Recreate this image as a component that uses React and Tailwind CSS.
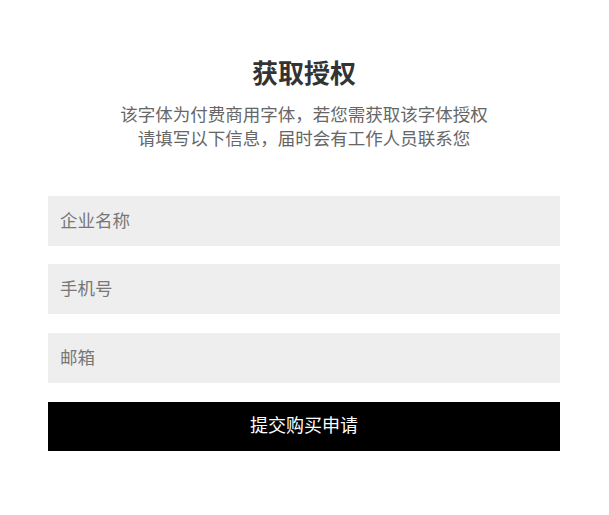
export default function App() {
  return (
    <div
      className="min-h-screen bg-white px-[48px]"
      style={{ fontFamily: '"Noto Sans CJK SC", "Noto Sans", sans-serif' }}
    >
      <div className="w-[512px] pt-[54px] flex flex-col">
        <h1 className="text-center text-[26px] leading-[36px] font-bold text-[#333333]">
          获取授权
        </h1>
        <p className="mt-[12px] text-center text-[17.5px] leading-[24px] text-[#666666]">
          该字体为付费商用字体，若您需获取该字体授权
          <br />
          请填写以下信息，届时会有工作人员联系您
        </p>
        <form className="mt-[46px] flex flex-col">
          <input
            type="text"
            placeholder="企业名称"
            className="h-[50px] w-full bg-[#eeeeee] px-3 pb-1 text-[17.5px] text-[#333] placeholder-[#777777] outline-none"
          />
          <input
            type="text"
            placeholder="手机号"
            className="mt-[18px] h-[50px] w-full bg-[#eeeeee] px-3 pb-1 text-[17.5px] text-[#333] placeholder-[#777777] outline-none"
          />
          <input
            type="text"
            placeholder="邮箱"
            className="mt-[19px] h-[50px] w-full bg-[#eeeeee] px-3 pb-1 text-[17.5px] text-[#333] placeholder-[#777777] outline-none"
          />
          <button
            type="button"
            className="mt-[19px] h-[49px] w-full bg-black pb-1 text-white text-[18px]"
          >
            提交购买申请
          </button>
        </form>
      </div>
    </div>
  );
}
